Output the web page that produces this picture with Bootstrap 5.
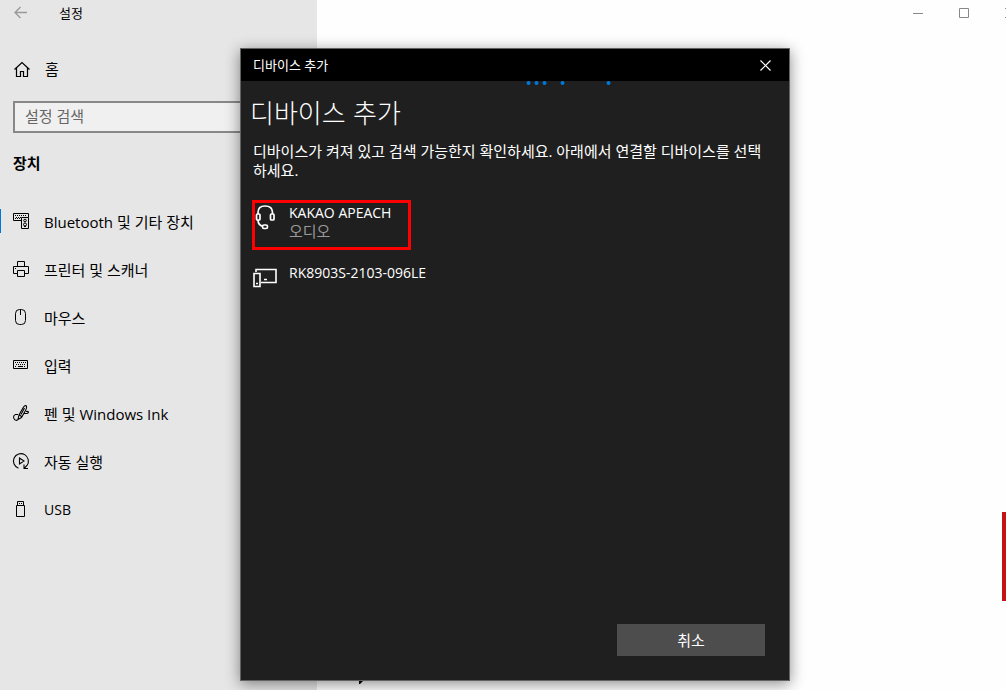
<!DOCTYPE html>
<html lang="ko">
<head>
<meta charset="utf-8">
<meta name="viewport" content="width=device-width, initial-scale=1">
<title>설정</title>
<link rel="stylesheet" href="https://cdn.jsdelivr.net/npm/bootstrap@5.3.0/dist/css/bootstrap.min.css">
<style>
  body { font-family: "Open Sans", "Noto Sans CJK KR", sans-serif; font-size: 14px; line-height: 18px; color: #000; background: #fefefe; }
  svg { display: block; flex: none; fill: none; stroke: currentColor; overflow: visible; }
  .side-panel { width: 317px; background: #e6e6e6; }
  .title-row { height: 26px; font-size: 13px; padding-left: 13px; gap: 30px; }
  .back-btn { color: #999; }
  .plain-btn { border: 0; background: none; padding: 0; }
  .home-link { height: 48px; margin-top: 19px; padding-left: 13px; gap: 15px; font-size: 15px; }
  .search-wrap { margin: 8px 13px 0; }
  .search-wrap .form-control { height: 32px; border: 2px solid #888; border-radius: 0; background: #f0f0f0; font-size: 15px; line-height: 18px; padding: 0 10px 2px; color: #000; }
  .search-wrap .form-control::placeholder { color: #666; opacity: 1; }
  .section-title { font-size: 15px; line-height: 18px; font-weight: 700; margin: 21px 0 25px; padding-left: 13px; }
  .side-nav .nav-link { height: 48px; padding: 0 0 0 13px; gap: 15px; color: #000; position: relative; font-size: 15px; }
  .side-nav span { padding-top: 2px; }
  .side-nav .latin-label { font-size: 14px; }
  .side-nav .active::before { content: ""; position: absolute; left: 0; top: 12px; width: 1px; height: 24px; background: #0078d7; }
  .win-controls { height: 26px; gap: 36px; color: #888; margin-right: -9px; }
  .red-edge { position: absolute; right: 0; top: 512px; width: 4px; height: 89px; background: #c41414; }
  .tip-mark { position: absolute; left: 359px; bottom: 5px; }
  .add-dialog { position: absolute; left: 240px; right: 216px; top: 48px; bottom: 9px; background: #1f1f1f; border: 1px solid #626262; color: #fff; box-shadow: 0 3px 14px rgba(0,0,0,.45); }
  .dialog-bar { height: 32px; background: #000; font-size: 13px; padding: 0 18px 0 12px; }
  .busy-dots { height: 4px; padding-left: 285px; }
  .dialog-title { font-family: "Noto Sans CJK KR", sans-serif; font-weight: 300; font-size: 26px; line-height: 32px; margin: 11px 0 0; padding-left: 9px; }
  .dialog-text { font-size: 15px; line-height: 19px; margin: 14px 20px 0 12px; word-break: break-all; }
  .device-list { margin: 20px 0 0 11px; }
  .device { gap: 11px; width: 159px; color: #fff; text-align: left; }
  .picked { height: 50px; border: 3px solid #f00; padding: 1px 0 0; }
  .second { margin-top: 14px; gap: 12px; white-space: nowrap; }
  .kind { color: #999; font-size: 15px; }
  .cancel-btn { width: 148px; height: 32px; margin: 0 24px 24px; border: 0; border-radius: 0; background: #4d4d4d; color: #fff; font-size: 15px; line-height: 18px; padding: 0; }
  .cancel-btn:hover { background: #5c5c5c; color: #fff; }
</style>
</head>
<body>
<div class="position-relative d-flex vh-100 overflow-hidden">
  <aside class="side-panel flex-shrink-0">
    <div class="title-row d-flex align-items-center">
      <button class="plain-btn back-btn" type="button" aria-label="뒤로"><svg width="16" height="16"><path d="M14 7.500H2M7.500 2L2 7.500L7.500 13" stroke-width="1.300"/></svg></button>
      <span>설정</span>
    </div>
    <a href="#" class="home-link d-flex align-items-center text-reset text-decoration-none">
      <svg width="17" height="17"><path d="M1.500 8.500L9 1.500L16.500 8.500M3.500 7V15.500H7.500V10.500H10.500V15.500H14.500V7" stroke-width="1.200"/></svg>
      <span>홈</span>
    </a>
    <div class="search-wrap"><input class="form-control shadow-none" type="search" placeholder="설정 검색" aria-label="설정 검색"></div>
    <h2 class="section-title">장치</h2>
    <nav class="side-nav nav flex-column">
      <a href="#" class="nav-link active d-flex align-items-center">
        <svg width="16" height="17"><path d="M8 7.500H.5V.5H15.500V4"/><path d="M2 2.500H14M3 4.500H9M2 5.500H8" stroke-dasharray="1 1"/><path d="M8.500 4.500H15.500V15.500H8.500Z" fill="#e6e6e6"/><circle cx="12" cy="7.500" r="1.300"/><circle cx="12" cy="11.500" r="1.500"/><path d="M11 13.500H13"/></svg>
        <span>Bluetooth 및 기타 장치</span></a>
      <a href="#" class="nav-link d-flex align-items-center">
        <svg width="16" height="16"><path d="M4.500 5.500V.5H11.500V5.500M4.500 12.500H.5V5.500H15.500V12.500H11.500M4.500 9.500H11.500V15.500H4.500ZM2 7.500H3"/></svg>
        <span>프린터 및 스캐너</span></a>
      <a href="#" class="nav-link d-flex align-items-center">
        <svg width="16" height="16"><rect x="2.500" y=".5" width="10" height="15" rx="4"/><path d="M7.500 .5V6"/></svg>
        <span>마우스</span></a>
      <a href="#" class="nav-link d-flex align-items-center">
        <svg width="16" height="16"><path d="M.5 3.500H14.500V11.500H.5Z"/><path d="M2 5.500H14M3 7.500H13M2 9.500H4M11 9.500H13" stroke-dasharray="1 1"/><path d="M5 9.500H10"/></svg>
        <span>입력</span></a>
      <a href="#" class="nav-link d-flex align-items-center">
        <svg width="16" height="16"><path d="M5 14.500L6 10L10.500 2Q12 0 13.500 1Q14 3 12.500 5.500L8.500 12.500ZM6.500 10L8.500 11.500M11.500 3L8 9.500M5 9.500H2.500Q.5 10 .5 12.500Q1 15 3.500 15.500L5 14.500M11 8.500H14Q15.500 8 15.500 7Q15 6 13 6.500" stroke-width="1.100"/></svg>
        <span>펜 및 Windows Ink</span></a>
      <a href="#" class="nav-link d-flex align-items-center">
        <svg width="16" height="16"><path d="M5.500 15.200A7.500 7.500 0 1 1 14 12.500L11.500 15M11 11.500V15.500H15M6.500 5V11L11 8Z" stroke-width="1.100"/></svg>
        <span>자동 실행</span></a>
      <a href="#" class="nav-link d-flex align-items-center">
        <svg width="16" height="16"><path d="M4.500 4.500V.5H10.500V4.500M3.500 4.500H11.500V15.500H3.500ZM6 2.500H7M8 2.500H9"/></svg>
        <span class="latin-label">USB</span></a>
    </nav>
  </aside>

  <main class="flex-grow-1">
    <div class="win-controls d-flex justify-content-end align-items-center">
      <button class="plain-btn text-reset" type="button" aria-label="최소화"><svg width="10" height="10"><path d="M0 5.500H10"/></svg></button>
      <button class="plain-btn text-reset" type="button" aria-label="최대화"><svg width="10" height="10"><path d="M.5 .5H9.500V9.500H.5Z"/></svg></button>
      <button class="plain-btn text-reset" type="button" aria-label="닫기"><svg width="10" height="10"><path d="M0 0L10 10M10 0L0 10"/></svg></button>
    </div>
  </main>
  <div class="red-edge"></div>
  <svg class="tip-mark" width="5" height="5"><path d="M0 0H5L1 4H0Z" fill="#000" stroke="none"/></svg>

  <section class="add-dialog d-flex flex-column" role="dialog" aria-labelledby="dialogTitle">
    <div class="dialog-bar d-flex align-items-center justify-content-between">
      <span>디바이스 추가</span>
      <button class="plain-btn text-white" type="button" aria-label="닫기"><svg width="11" height="11"><path d="M.5 .5L10.500 10.500M10.500 .5L.5 10.500" stroke-width="1.200"/></svg></button>
    </div>
    <div class="busy-dots"><svg width="86" height="4"><g fill="#0078d7" stroke="none"><circle cx="2.500" cy="2" r="2"/><circle cx="10.500" cy="2" r="2"/><circle cx="18.500" cy="2" r="2"/><circle cx="36.500" cy="2" r="2"/><circle cx="82.500" cy="2" r="2"/></g></svg></div>
    <h1 class="dialog-title" id="dialogTitle">디바이스 추가</h1>
    <p class="dialog-text">디바이스가 켜져 있고 검색 가능한지 확인하세요. 아래에서 연결할 디바이스를 선택하세요.</p>
    <div class="device-list">
      <button type="button" class="plain-btn device picked d-flex align-items-start">
        <svg width="23" height="26"><g stroke-width="1.700"><path d="M3 10V8.500Q3 2 10 2Q17.500 2 17.500 8.500V10"/><rect x="1.500" y="10" width="3.500" height="6" rx="1"/><rect x="15.500" y="10" width="3.500" height="6" rx="1"/><path d="M3 16Q3 21 8 22.500"/><rect x="7.500" y="21" width="5" height="3.500" rx="1.500"/></g></svg>
        <span><span class="d-block">KAKAO APEACH</span><span class="d-block kind">오디오</span></span>
      </button>
      <button type="button" class="plain-btn device second d-flex align-items-start">
        <svg width="25" height="24"><path d="M4 8V5.500H24V18.500H9M2 9.500H8V22.500H2ZM12 15.500H15M4 19.500H6" stroke-width="1.600"/></svg>
        <span>RK8903S-2103-096LE</span>
      </button>
    </div>
    <button type="button" class="btn cancel-btn mt-auto align-self-end">취소</button>
  </section>
</div>
<script src="https://cdn.jsdelivr.net/npm/bootstrap@5.3.0/dist/js/bootstrap.bundle.min.js"></script>
</body>
</html>
